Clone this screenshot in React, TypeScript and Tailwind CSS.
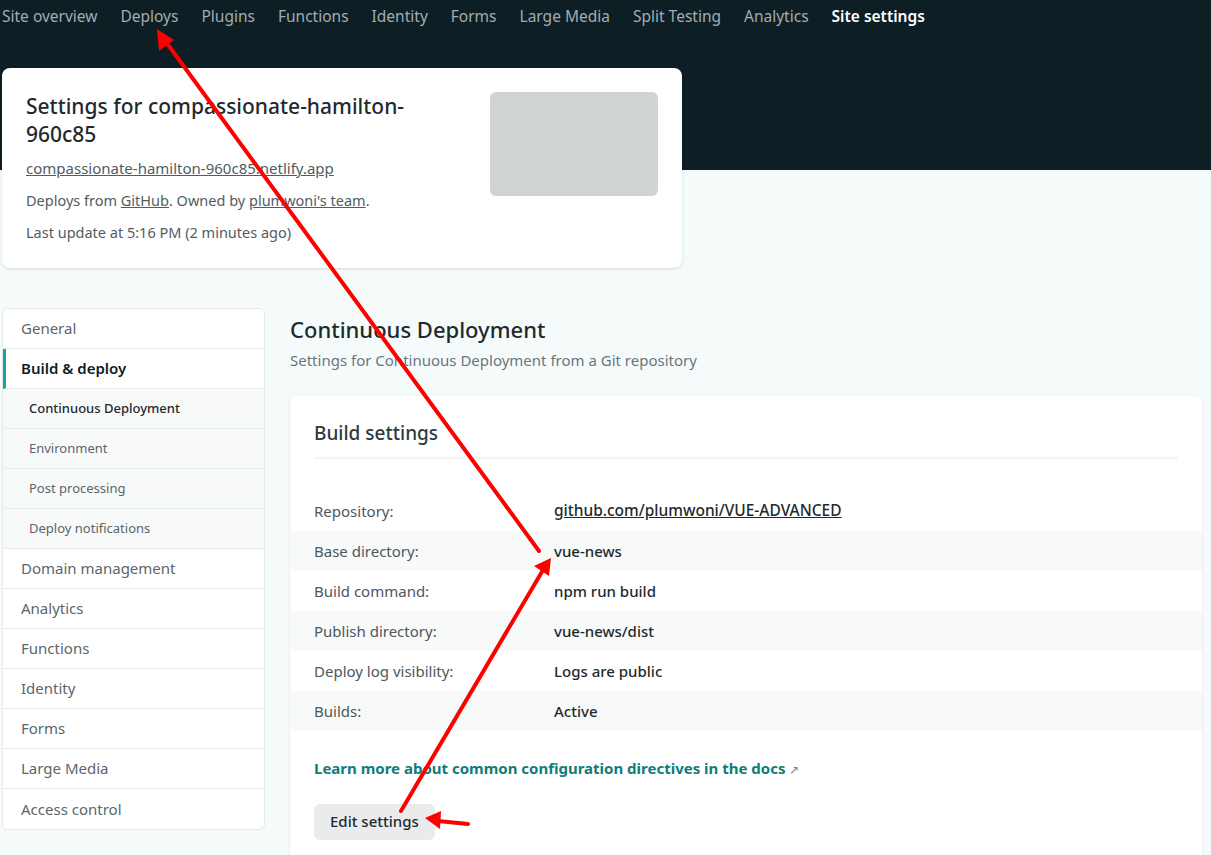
import React from "react";

const navItems = [
  "Site overview",
  "Deploys",
  "Plugins",
  "Functions",
  "Identity",
  "Forms",
  "Large Media",
  "Split Testing",
  "Analytics",
];

const subItems = ["Continuous Deployment", "Environment", "Post processing", "Deploy notifications"];
const lowerItems = ["Domain management", "Analytics", "Functions", "Identity", "Forms", "Large Media", "Access control"];

const rows = [
  { label: "Repository:", value: "github.com/plumwoni/VUE-ADVANCED", link: true },
  { label: "Base directory:", value: "vue-news" },
  { label: "Build command:", value: "npm run build" },
  { label: "Publish directory:", value: "vue-news/dist" },
  { label: "Deploy log visibility:", value: "Logs are public" },
  { label: "Builds:", value: "Active" },
];

function Arrows() {
  // red annotation arrows drawn over the screenshot
  return (
    <svg className="pointer-events-none absolute left-0 top-0" width="1211" height="855" viewBox="0 0 1211 855">
      <g stroke="#ff0000" strokeWidth="4" strokeLinecap="round" fill="none">
        <line x1="539" y1="551" x2="166" y2="42" />
        <line x1="401" y1="811" x2="543" y2="570" />
        <line x1="468" y1="824" x2="438" y2="821" />
      </g>
      <g fill="#ff0000">
        <polygon points="157,29 159,51 174,40" />
        <polygon points="551,558 534,566 549,576" />
        <polygon points="425,818 441,811 440,829" />
      </g>
    </svg>
  );
}

export default function App() {
  return (
    <div
      className="relative min-h-[855px] bg-[linear-gradient(#0e1e25_170px,#f5fbfb_170px)] pl-[2px] text-[#2d3b41]"
      style={{ fontFamily: '"Noto Sans", "Open Sans", sans-serif' }}
    >
      {/* Top nav */}
      <nav className="flex h-[33px] items-center gap-[23px] text-[15.5px]">
        {navItems.map((item) => (
          <span key={item} className="text-[#a3acb0]">
            {item}
          </span>
        ))}
        <span className="font-semibold text-white">Site settings</span>
      </nav>

      {/* Site header card */}
      <div className="mt-[35px] flex w-[680px] justify-between rounded-lg bg-white px-6 pb-[26px] pt-6 shadow-[0_1px_3px_rgba(14,30,37,0.15)]">
        <div className="w-[400px]">
          <h1 className="text-[21px] font-medium leading-[28px] text-[#1f2a2e]">
            Settings for compassionate-hamilton-960c85
          </h1>
          <p className="mt-[10px] text-[15px] leading-5 text-[#525c61] underline">
            compassionate-hamilton-960c85.netlify.app
          </p>
          <p className="mt-[12px] text-[14.5px] leading-5 text-[#525c61]">
            Deploys from <span className="underline">GitHub</span>. Owned by{" "}
            <span className="underline">plumwoni's team</span>.
          </p>
          <p className="mt-[12px] text-[14.5px] leading-5 text-[#525c61]">Last update at 5:16 PM (2 minutes ago)</p>
        </div>
        <div className="h-[104px] w-[168px] rounded-md bg-[#d0d3d4]" />
      </div>

      {/* Body */}
      <div className="mt-[40px] flex items-start gap-[25px]">
        <aside className="w-[263px] overflow-hidden rounded-md border border-[#e5e9ea] bg-white text-[15px]">
          <div className="flex h-[40px] items-center border-b border-[#e9eced] px-[18px] text-[#5b666b]">General</div>
          <div className="flex h-[40px] items-center border-b border-l-[3px] border-b-[#e9eced] border-l-[#15a39a] px-[15px] font-semibold text-[#0e1e25]">
            Build &amp; deploy
          </div>
          {subItems.map((s, i) => (
            <div
              key={s}
              className={`flex h-[40px] items-center border-b border-[#e9eced] bg-[#f8f9f9] px-[26px] text-[13px] ${
                i === 0 ? "font-medium text-[#1f2a2e]" : "text-[#5b666b]"
              }`}
            >
              {s}
            </div>
          ))}
          {lowerItems.map((s, i) => (
            <div
              key={s}
              className={`flex h-[40px] items-center px-[18px] text-[#5b666b] ${
                i < lowerItems.length - 1 ? "border-b border-[#e9eced]" : ""
              }`}
            >
              {s}
            </div>
          ))}
        </aside>

        <main className="w-[912px]">
          <h2 className="pt-[6px] text-[22px] font-medium leading-[30px] text-[#1f2a2e]">Continuous Deployment</h2>
          <p className="mt-[6px] text-[15px] leading-5 text-[#6b767b]">
            Settings for Continuous Deployment from a Git repository
          </p>

          <section className="mt-[26px] rounded-lg bg-white pb-6 pt-[24px] shadow-[0_1px_3px_rgba(14,30,37,0.1)]">
            <div className="mx-6 border-b-2 border-[#f3f5f5] pb-[11px]">
              <h3 className="text-[19px] font-medium leading-[26px] text-[#2d3b41]">Build settings</h3>
            </div>
            <div className="mt-[32px]">
              {rows.map((r, i) => (
                <div
                  key={r.label}
                  className={`flex h-[40px] items-center px-6 text-[15px] ${i % 2 === 1 ? "bg-[#f8fafa]" : ""}`}
                >
                  <span className="w-[240px] text-[#4c575c]">{r.label}</span>
                  <span
                    className={`font-medium text-[#1f2a2e] ${r.link ? "text-[15.5px] underline" : ""}`}
                  >
                    {r.value}
                  </span>
                </div>
              ))}
            </div>
            <p className="mx-6 mt-[26px] text-[15px] font-bold text-[#0f7c79]">
              Learn more about common configuration directives in the docs{" "}
              <span className="text-[12px] font-normal text-[#7b878b]">↗</span>
            </p>
            <button className="ml-6 mt-[24px] h-[36px] rounded-md bg-[#e9ebed] px-4 text-[15px] font-medium text-[#1f2a2e]">
              Edit settings
            </button>
          </section>
        </main>
      </div>

      <Arrows />
    </div>
  );
}
